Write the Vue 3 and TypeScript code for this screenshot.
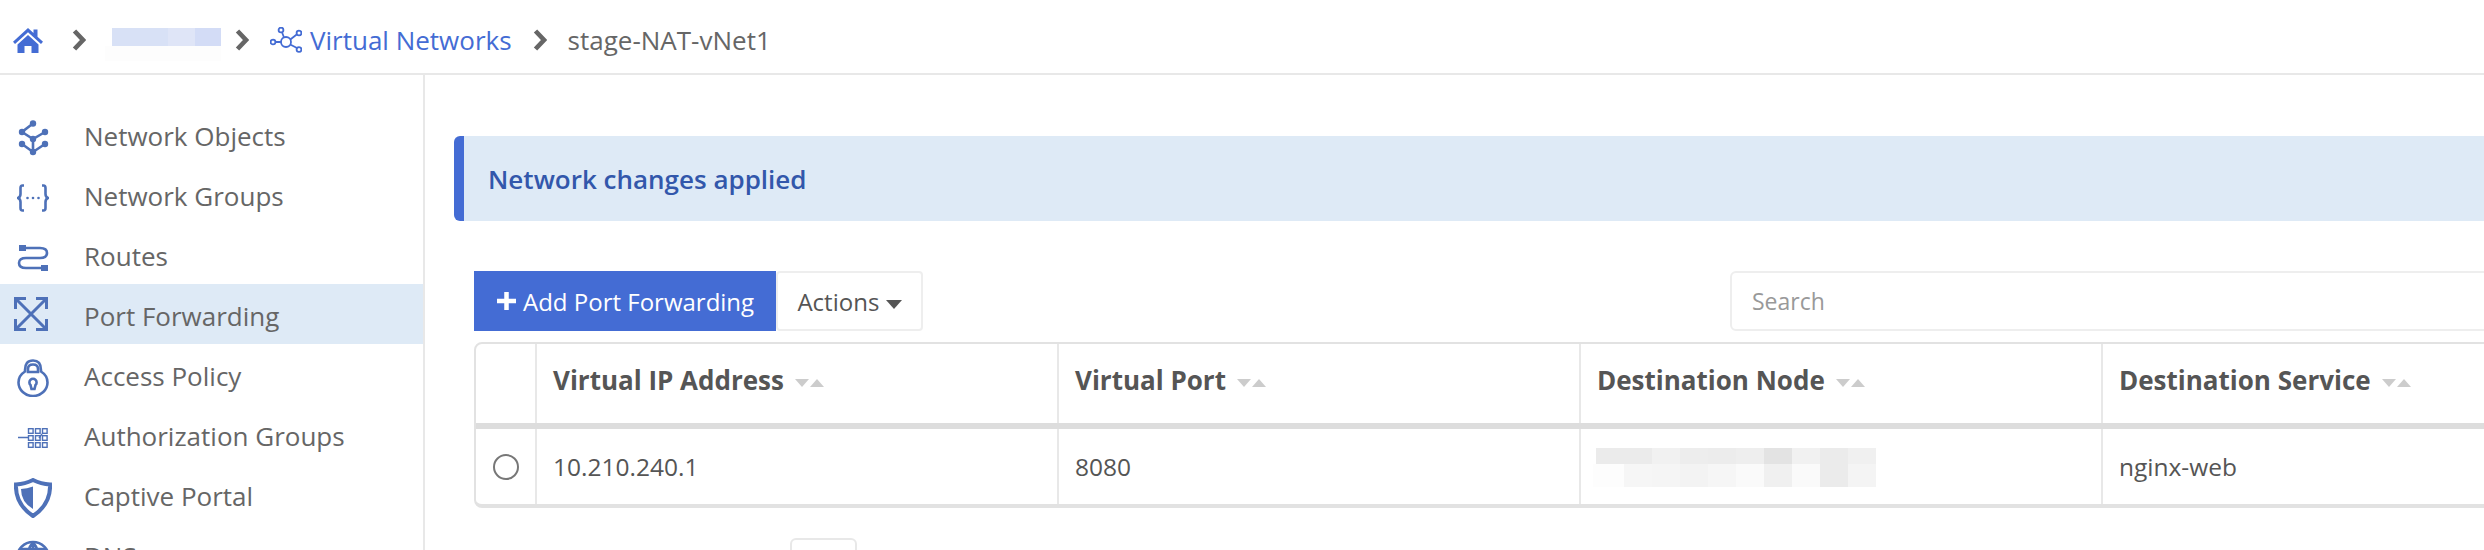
<script setup lang="ts">
const nav = [
  { label: 'Network Objects', icon: 'objects' },
  { label: 'Network Groups', icon: 'groups' },
  { label: 'Routes', icon: 'routes' },
  { label: 'Port Forwarding', icon: 'port', active: true },
  { label: 'Access Policy', icon: 'lock' },
  { label: 'Authorization Groups', icon: 'auth' },
  { label: 'Captive Portal', icon: 'shield' },
  { label: 'DNS', icon: 'globe' },
]
const cols = ['Virtual IP Address', 'Virtual Port', 'Destination Node', 'Destination Service']
const blur = [
  ['#ebebeb', '#ebebeb', '#f1f1f1', '#ededed', '#ececec', '#eeeeee', '#e3e3e3', '#f1f1f1', '#ebebeb', '#f0f0f0'],
  ['#fdfdfd', '#f6f6f6', '#f5f5f5', '#f3f3f3', '#f6f6f6', '#fafafa', '#f0f0f0', '#fafafa', '#ebebeb', '#f4f4f4'],
]
</script>

<template>
  <div class="page">
    <header class="crumbs">
      <svg class="home" viewBox="0 0 30 25"><path d="M15 0 L20.5 5 V1.5 H24.5 V8.7 L30 13.8 L28 16 L15 4.2 L2 16 L0 13.8 Z" /><path d="M15 7 L25.5 16.5 V25 H18.5 V18 H11.5 V25 H4.5 V16.5 Z" /></svg>
      <svg class="chev" viewBox="0 0 14 22"><path d="M2.5 2 L11 11 L2.5 20" /></svg>
      <div class="mask">
        <div class="mask-top"><span class="m1" /><span class="m2" /><span class="m3" /></div>
        <div class="mask-low" />
      </div>
      <svg class="chev" viewBox="0 0 14 22"><path d="M2.5 2 L11 11 L2.5 20" /></svg>
      <svg class="netico" viewBox="0 0 32 26">
        <circle cx="3" cy="15" r="2.4" /><circle cx="11" cy="3" r="2.4" /><circle cx="29" cy="6" r="2.4" /><circle cx="29" cy="22.5" r="2.4" /><circle cx="16" cy="15" r="5" />
        <path d="M5.4 15 H11 M12 5.3 L14 10.5 M27 7.3 L20.3 12.5 M27 21 L20.2 17.5" />
      </svg>
      <a class="link">Virtual Networks</a>
      <svg class="chev" viewBox="0 0 14 22"><path d="M2.5 2 L11 11 L2.5 20" /></svg>
      <span class="current">stage-NAT-vNet1</span>
    </header>
    <div class="body">
      <aside class="side">
        <div v-for="n in nav" :key="n.label" class="item" :class="{ active: n.active }">
          <span class="ico" :class="n.icon">
            <svg v-if="n.icon === 'objects'" viewBox="0 0 32 36" width="32" height="36"><g class="fill"><circle cx="16" cy="3.5" r="3.2" /><circle cx="5" cy="12" r="3.2" /><circle cx="28" cy="12" r="3.2" /><circle cx="16" cy="19" r="3.2" /><circle cx="5" cy="24" r="3.2" /><circle cx="28" cy="24" r="3.2" /><circle cx="16" cy="32" r="3.2" /></g><path class="line" d="M16 3.5 L5 12 L16 19 L28 12 M16 19 V32 M5 24 L16 32 L28 24" /></svg>
            <svg v-else-if="n.icon === 'groups'" viewBox="0 0 32 28" width="32" height="28"><path class="line" d="M7 1.5 H5.5 Q3.5 1.5 3.5 4 V10 Q3.5 13 1 14 Q3.5 15 3.5 18 V24 Q3.5 26.5 5.5 26.5 H7 M25 1.5 H26.5 Q28.5 1.5 28.5 4 V10 Q28.5 13 31 14 Q28.5 15 28.5 18 V24 Q28.5 26.5 26.5 26.5 H25" /><g class="fill"><circle cx="10.5" cy="14" r="1.3" /><circle cx="16" cy="14" r="1.3" /><circle cx="21.5" cy="14" r="1.3" /></g></svg>
            <svg v-else-if="n.icon === 'routes'" viewBox="0 0 32 26" width="32" height="26"><path class="line" d="M4 3 H23 Q30 3 30 8 Q30 13 23 13 H9 Q2 13 2 18 Q2 23 9 23 H26" /><g class="fill"><rect x="2" y="0" width="7" height="6" /><rect x="24" y="20" width="7" height="6" /></g></svg>
            <svg v-else-if="n.icon === 'port'" viewBox="0 0 34 34" width="34" height="34"><path class="line heavy" d="M2 2 L32 32 M32 2 L2 32 M1.5 12 V1.5 H12 M22 1.5 H32.5 V12 M1.5 22 V32.5 H12 M22 32.5 H32.5 V22" /></svg>
            <svg v-else-if="n.icon === 'lock'" viewBox="0 0 32 38" width="32" height="38"><path class="line" d="M8 11 Q8 1.5 16 1.5 Q24 1.5 24 11 V12.5 Q30.5 16.5 30.5 23.5 A14.5 13.5 0 0 1 1.5 23.5 Q1.5 16.5 8 12.5 Z M11 13 V10 Q11 5.5 16 5.5 Q21 5.5 21 10 V13 Z M13.5 26 A3.6 3.6 0 1 1 18.5 26 L17.5 30 H14.5 Z" /></svg>
            <svg v-else-if="n.icon === 'auth'" viewBox="0 0 30 20" width="30" height="20"><path class="thin" d="M0 9.5 H11 M21 10 L24 6" /><g class="thin"><rect v-for="c in 9" :key="c" :x="10.5 + ((c - 1) % 3) * 7" :y="0.7 + Math.floor((c - 1) / 3) * 7" width="4.6" height="4.6" /></g></svg>
            <svg v-else-if="n.icon === 'shield'" viewBox="0 0 38 40" width="38" height="40"><path class="line wide" d="M19 2 Q27 6 36 6.5 Q37 26 19 38 Q1 26 2 6.5 Q11 6 19 2 Z" /><path class="fill" d="M19 8.5 V31 Q7 24 7 11 Q13 10.5 19 8.5 Z" /></svg>
            <svg v-else viewBox="0 0 36 36" width="36" height="36"><circle class="line" cx="18" cy="18" r="16" /><path class="line" d="M2 18 H34 M18 2 V34 M5 9 H31 M5 27 H31 M18 2 Q6 18 18 34 M18 2 Q30 18 18 34" /></svg>
          </span>
          <span class="label">{{ n.label }}</span>
        </div>
      </aside>
      <main class="main">
        <div class="alert">Network changes applied</div>
        <div class="panel">
          <div class="toolbar">
            <button class="add"><svg class="plus" viewBox="0 0 21 20"><path d="M10.5 1 V19 M1 10 H20" /></svg>Add Port Forwarding</button>
            <button class="actions">Actions <i class="caret" /></button>
            <div class="search">Search</div>
          </div>
          <div class="tbl">
            <div class="row head">
              <div class="cell sel" />
              <div v-for="c in cols" :key="c" class="cell">
                <b>{{ c }}</b>
                <span class="sort"><i class="down" /><i class="up" /></span>
              </div>
            </div>
            <div class="row data">
              <div class="cell sel"><span class="radio" /></div>
              <div class="cell">10.210.240.1</div>
              <div class="cell">8080</div>
              <div class="cell">
                <div class="blur">
                  <div v-for="(line, i) in blur" :key="i" class="blur-line">
                    <span v-for="(b, j) in line" :key="j" class="px" :style="{ background: b }" />
                  </div>
                </div>
              </div>
              <div class="cell">nginx-web</div>
            </div>
          </div>
          <div class="pager"><span class="pg" /></div>
        </div>
      </main>
    </div>
  </div>
</template>

<style>
html, body { margin: 0; background: #fff; overflow: hidden; }
</style>

<style scoped>
.page { width: 2484px; height: 550px; overflow: hidden; font-family: "Open Sans", sans-serif; color: #666; font-size: 26px; background: #fff; }
.crumbs { height: 75px; box-sizing: border-box; border-bottom: 2px solid #e8e8e8; display: flex; align-items: center; padding: 7px 0 0 13px; }
.home { width: 30px; height: 25px; fill: #446cd4; margin-right: 29px; flex: none; }
.chev { width: 14px; height: 22px; fill: none; stroke: #666; stroke-width: 4.6px; flex: none; }
.mask { width: 116px; margin: -7px 14px 0 19px; align-self: flex-start; padding-top: 28px; }
.mask-top { display: flex; height: 18px; margin-left: 7px; }
.m1 { width: 56px; background: #d8e1f6; }
.m2 { width: 27px; background: #dfe5f7; }
.m3 { width: 26px; background: #d3dcf6; }
.mask-low { height: 15px; background: #fdfdfd; }
.netico { width: 32px; height: 26px; fill: none; stroke: #446cd4; stroke-width: 1.8px; margin: 0 8px 0 21px; flex: none; }
.link { color: #446cd4; margin-right: 21px; }
.current { margin-left: 21px; }
.body { display: flex; height: 475px; }
.side { width: 425px; box-sizing: border-box; border-right: 2px solid #e8e8e8; padding-top: 29px; flex: none; }
.item { height: 60px; box-sizing: border-box; padding-top: 7px; display: flex; align-items: center; }
.item.active { background: #deeaf6; }
.ico { width: 60px; margin-left: 3px; display: flex; justify-content: center; flex: none; }
.ico.port { margin: -7px 0 0 1px; }
.label { margin: -3px 0 0 21px; }
.ico.port + .label { margin-left: 23px; }
.line { fill: none; stroke: #4e71b8; stroke-width: 2.6px; }
.line.wide { stroke-width: 4px; }
.line.heavy { stroke-width: 3px; }
.thin { fill: none; stroke: #4e71b8; stroke-width: 1.4px; }
.fill { fill: #4e71b8; }
.main { flex: 1; min-width: 0; padding: 61px 0 0 29px; }
.alert { height: 85px; width: 2200px; box-sizing: border-box; background: #deeaf6; border-left: 10px solid #446cd4; border-radius: 6px 0 0 6px; color: #3257ab; font-weight: 600; display: flex; align-items: center; padding-left: 24px; }
.panel { padding: 50px 0 0 20px; width: 2200px; }
.toolbar { display: flex; height: 60px; align-items: stretch; font-size: 24px; }
.add { width: 302px; background: #446cd4; color: #fff; border: 0; font: inherit; padding: 0 0 0 22px; display: flex; align-items: center; gap: 6px; }
.plus { width: 21px; height: 20px; fill: none; stroke: #fff; stroke-width: 4.5px; flex: none; }
.actions { width: 147px; background: #fff; border: 2px solid #eee; border-radius: 4px; font: inherit; color: #555; padding: 0; }
.caret { display: inline-block; border: 8px solid transparent; border-top: 9px solid #555; border-bottom: 0; vertical-align: middle; }
.search { margin-left: 807px; width: 900px; box-sizing: border-box; border: 2px solid #eee; border-radius: 6px; padding-left: 20px; display: flex; align-items: center; color: #999; font-size: 23px; }
.tbl { margin-top: 11px; width: 2200px; border: 2px solid #e2e2e2; border-bottom-width: 4px; border-radius: 8px; box-sizing: border-box; }
.row { display: flex; }
.head { height: 79px; border-bottom: 6px solid #ddd; box-sizing: content-box; }
.data { height: 75px; }
.cell { width: 522px; flex: none; box-sizing: border-box; border-right: 2px solid #e8e8e8; padding: 0 16px; display: flex; align-items: center; color: #555; font-size: 24.5px; }
.cell.sel { width: 61px; padding: 0; justify-content: center; }
.head .cell { align-items: flex-start; padding-top: 18px; font-size: 26px; }
.head b { font-weight: 700; color: #555; }
.sort { display: inline-flex; gap: 1px; margin: 17px 0 0 11px; }
.sort i { border: 7px solid transparent; width: 0; height: 0; }
.down { border-top: 8px solid #ccc !important; border-bottom: 0 !important; }
.up { border-bottom: 8px solid #ccc !important; border-top: 0 !important; }
.radio { width: 26px; height: 26px; border: 2px solid #777; border-radius: 50%; box-sizing: border-box; }
.blur { display: flex; flex-direction: column; margin: 2px 0 0 -1px; }
.blur-line { display: flex; height: 16px; }
.blur-line + .blur-line { height: 23px; margin-left: -3px; }
.px { width: 28px; }
.blur-line + .blur-line .px:first-child { width: 31px; }
.pager { padding: 30px 0 0 316px; }
.pg { display: block; width: 67px; height: 40px; border: 2px solid #e8e8e8; border-radius: 6px; box-sizing: border-box; }
</style>
